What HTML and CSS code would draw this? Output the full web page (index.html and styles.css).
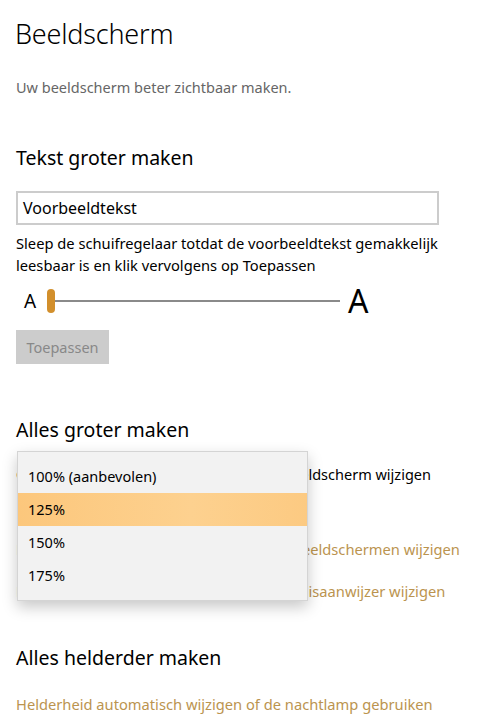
FILE: index.html
```html
<!DOCTYPE html>
<html lang="nl">
<head>
<meta charset="utf-8">
<title>Beeldscherm</title>
<link rel="stylesheet" href="styles.css">
</head>
<body>
<main class="page">
  <h1 class="title">Beeldscherm</h1>
  <p class="subtitle">Uw beeldscherm beter zichtbaar maken.</p>

  <section class="section text-size">
    <h2 class="heading">Tekst groter maken</h2>
    <div class="sample">Voorbeeldtekst</div>
    <p class="desc">Sleep de schuifregelaar totdat de voorbeeldtekst gemakkelijk leesbaar is en klik vervolgens op Toepassen</p>
    <div class="slider">
      <span class="a-small">A</span>
      <div class="track"><span class="thumb"></span></div>
      <span class="a-big">A</span>
    </div>
    <button class="btn" type="button" disabled>Toepassen</button>
  </section>

  <section class="section scale">
    <h2 class="heading">Alles groter maken</h2>
    <p class="label">Grootte van apps en tekst op het hoofdbeeldscherm wijzigen</p>
    <div class="combo-space"></div>
    <a class="link link-other" href="#">De grootte van apps en tekst op andere beeldschermen wijzigen</a>
    <a class="link link-mouse" href="#">De grootte en kleur van tekstcursor en muisaanwijzer wijzigen</a>
    <ul class="dropdown">
      <li class="option">100% (aanbevolen)</li>
      <li class="option selected">125%</li>
      <li class="option">150%</li>
      <li class="option">175%</li>
    </ul>
  </section>

  <section class="section bright">
    <h2 class="heading">Alles helderder maken</h2>
    <a class="link" href="#">Helderheid automatisch wijzigen of de nachtlamp gebruiken</a>
  </section>
</main>
</body>
</html>
```

FILE: styles.css
```css
* { box-sizing: border-box; }

html, body {
  margin: 0;
  padding: 0;
  background: #ffffff;
}

body {
  font-family: "Noto Sans", "Open Sans", sans-serif;
  color: #000;
  width: 490px;
  height: 720px;
  overflow: hidden;
}

.page {
  padding: 14px 0 0 16px;
}

.title {
  margin: 0 0 0 -1px;
  font-size: 27px;
  font-weight: 300;
  line-height: 40px;
  letter-spacing: -0.2px;
}

.subtitle {
  margin: 23px 0 0;
  font-size: 14.5px;
  line-height: 20px;
  color: #666;
}

.section {
  position: relative;
}

.heading {
  margin: 0;
  font-size: 19.5px;
  font-weight: 400;
  line-height: 26px;
}

.text-size { margin-top: 48px; }

.sample {
  margin-top: 20px;
  width: 423px;
  height: 34px;
  border: 2px solid #cccccc;
  padding: 0 0 0 5px;
  font-size: 16px;
  line-height: 30px;
}

.desc {
  margin: 7px 0 0;
  width: 450px;
  font-size: 14.7px;
  line-height: 22px;
}

.slider {
  display: flex;
  align-items: center;
  height: 26px;
  margin-top: 12px;
}

.a-small {
  font-size: 19px;
  line-height: 20px;
  margin-left: 8px;
  width: 23px;
}

.track {
  position: relative;
  width: 293px;
  height: 2px;
  background: #8a8a8a;
}

.thumb {
  position: absolute;
  left: 0;
  top: -11px;
  width: 8px;
  height: 24px;
  border-radius: 4px;
  background: #d28f2c;
}

.a-big {
  font-size: 32px;
  line-height: 26px;
  margin-left: 8px;
}

.btn {
  display: block;
  margin-top: 16px;
  width: 93px;
  height: 34px;
  border: 0;
  padding: 0;
  background: #cccccc;
  color: #888;
  font-family: inherit;
  font-size: 14.5px;
}

.scale { margin-top: 53px; }

.label {
  margin: 21px 0 0;
  font-size: 14.5px;
  line-height: 20px;
}

.combo-space { height: 55px; }

.link {
  display: block;
  color: #bb944f;
  text-decoration: none;
  font-size: 14.7px;
  line-height: 20px;
}

.link-mouse { margin-top: 22px; }

.dropdown {
  position: absolute;
  left: 1px;
  top: 34px;
  width: 291px;
  margin: 0;
  padding: 8px 0 8px;
  list-style: none;
  background: #f2f2f2;
  border: 1px solid #d4d4d4;
  box-shadow: 0 6px 14px rgba(0,0,0,0.22);
}

.option {
  height: 33px;
  padding-left: 10px;
  font-size: 14.5px;
  line-height: 33px;
}

.option.selected {
  background: linear-gradient(90deg, #fcc77c, #fdd18f 60%, #fcca82);
}

.bright { margin-top: 44px; }

.bright .link { margin-top: 23px; }
```
